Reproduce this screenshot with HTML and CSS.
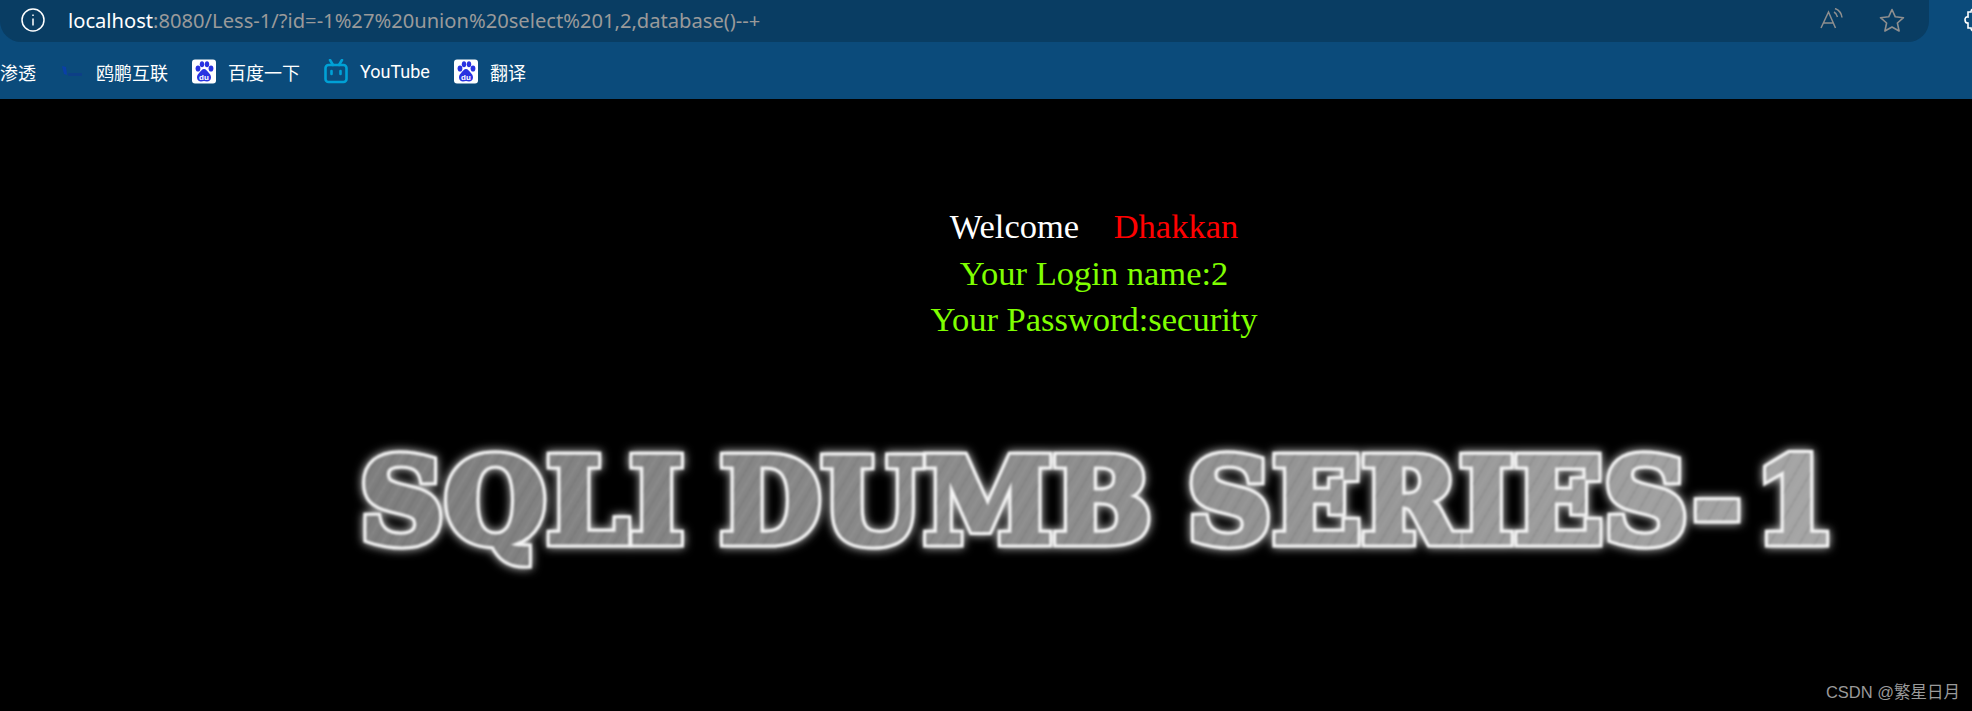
FILE: index.html
```html
<!DOCTYPE html>
<html lang="en">
<head>
  <meta charset="UTF-8">
  <title>Less-1</title>
  <link rel="stylesheet" href="styles.css">
</head>
<body>
  <header class="browser">
    <div class="toolbar">
      <div class="address">
        <svg class="info" width="24" height="24" viewBox="0 0 24 24" fill="none" stroke="#fff" stroke-width="1.500">
          <circle cx="12" cy="12" r="11"/>
          <path d="M12 10.500v7M12 6.500v1.500"/>
        </svg>
        <div class="url"><span class="host">localhost</span>:8080/Less-1/?id=-1%27%20union%20select%201,2,database()--+</div>
        <svg class="read" width="24" height="22" viewBox="0 0 24 22" fill="none" stroke="#8f8f8f" stroke-width="1.500">
          <path d="M1 20 8.500 4 15.500 20M3.500 15h10"/>
          <path d="M14 4c2 1 3 3 3.500 5M15 .5c4 1.500 6.500 5 7 9"/>
        </svg>
        <svg class="star" width="26" height="24" viewBox="0 0 26 24" fill="none" stroke="#8f8f8f" stroke-width="1.600" stroke-linejoin="round">
          <path d="M13 1.500 16.300 8.800 24.500 9.700 18.400 15 20.100 23 13 19 5.900 23 7.600 15 1.500 9.700 9.700 8.800z"/>
        </svg>
      </div>
      <svg class="ext" width="24" height="24" viewBox="0 0 24 24" fill="none" stroke="#fff" stroke-width="1.600">
        <path d="M8 4h3c0-4 6-4 6 0h4v5c4 0 4 6 0 6v5h-4c0 4-6 4-6 0H8v-5c-4 0-4-7 0-6z"/>
      </svg>
    </div>
    <nav class="bookmarks">
      <a class="mark">渗透</a>
      <a class="mark">
        <svg class="mini" width="24" height="24" viewBox="0 0 24 24">
          <path d="M2 6l4 1 1 8-3-1z" fill="#0a3fa8"/>
          <path d="M8 13h14v3H8z" fill="#0d3f86"/>
        </svg>
        鸥鹏互联
      </a>
      <a class="mark">
        <svg width="24" height="25" viewBox="0 0 24 24">
          <rect width="24" height="24" rx="3" fill="#fff"/>
          <ellipse cx="6" cy="9" rx="2.400" ry="3.100" fill="#2932e1"/>
          <ellipse cx="10" cy="4.800" rx="2.200" ry="3" fill="#2932e1"/>
          <ellipse cx="15" cy="4.800" rx="2.200" ry="3" fill="#2932e1"/>
          <ellipse cx="19" cy="9" rx="2.400" ry="3.100" fill="#2932e1"/>
          <path d="M12 9.500c-2 0-3 2-4.500 3.500-1.500 1.500-2.500 3-2.500 5 0 2.500 2 4 4 4 1.200 0 2-.4 3-.4s1.800.4 3 .4c2 0 4-1.500 4-4 0-2-1-3.500-2.500-5-1.500-1.500-2.500-3.500-4.500-3.500z" fill="#2932e1"/>
          <text x="12" y="20" class="du">du</text>
        </svg>
        百度一下
      </a>
      <a class="mark">
        <svg width="24" height="25" viewBox="0 0 24 25" fill="none" stroke="#00a1d6" stroke-width="2.600">
          <rect x="1.500" y="6" width="21" height="17" rx="3"/>
          <path d="M6 1l3 5M18 1l-3 5" stroke-linecap="round"/>
          <path d="M7.500 12v3M16.500 12v3" stroke-linecap="round"/>
        </svg>
        YouTube
      </a>
      <a class="mark">
        <svg width="24" height="25" viewBox="0 0 24 24">
          <rect width="24" height="24" rx="3" fill="#fff"/>
          <ellipse cx="6" cy="9" rx="2.400" ry="3.100" fill="#2932e1"/>
          <ellipse cx="10" cy="4.800" rx="2.200" ry="3" fill="#2932e1"/>
          <ellipse cx="15" cy="4.800" rx="2.200" ry="3" fill="#2932e1"/>
          <ellipse cx="19" cy="9" rx="2.400" ry="3.100" fill="#2932e1"/>
          <path d="M12 9.500c-2 0-3 2-4.500 3.500-1.500 1.500-2.500 3-2.500 5 0 2.500 2 4 4 4 1.200 0 2-.4 3-.4s1.800.4 3 .4c2 0 4-1.500 4-4 0-2-1-3.500-2.500-5-1.500-1.500-2.500-3.500-4.500-3.500z" fill="#2932e1"/>
          <text x="12" y="20" class="du">du</text>
        </svg>
        翻译
      </a>
    </nav>
  </header>

  <main class="page">
    <div class="login">
      <div>Welcome&nbsp;&nbsp;&nbsp;&nbsp;<span class="red">Dhakkan</span></div>
      <div class="green">Your Login name:2</div>
      <div class="green">Your Password:security</div>
    </div>
    <div class="banner"><span class="banner-text" data-text="SQLI DUMB SERIES-&#8202;1">SQLI DUMB SERIES-&#8202;1</span></div>
  </main>

  <div class="watermark">CSDN @繁星日月</div>
</body>
</html>
```

FILE: styles.css
```css
html, body {
  margin: 0;
  height: 100%;
}

body {
  position: relative;
  height: 711px;
  overflow: hidden;
  background: #000;
  font-family: Roboto, "Noto Sans CJK SC", sans-serif;
}

.du {
  font-family: "Liberation Sans", sans-serif;
  font-size: 8px;
  font-weight: bold;
  fill: #fff;
  text-anchor: middle;
}

.browser {
  height: 99px;
  background: #0b4b7b;
}

.toolbar {
  display: flex;
  align-items: flex-start;
  height: 42px;
}

.address {
  display: flex;
  flex: none;
  align-items: center;
  width: 1929px;
  height: 42px;
  background: #093d63;
  border-radius: 0 0 21px 21px;
}

.info {
  margin-left: 21px;
  margin-top: -2px;
}

.url {
  margin-left: 23px;
  margin-top: -3px;
  flex: 1;
  font-family: "Noto Sans", "Open Sans", sans-serif;
  font-size: 20.150px;
  color: #9a9a9a;
  white-space: nowrap;
}

.host {
  color: #fff;
}

.read {
  margin-top: -4px;
  margin-right: 35px;
}

.star {
  margin-top: -2px;
  margin-right: 24px;
}

.ext {
  margin-left: 31px;
  margin-top: 8px;
  flex: none;
}

.bookmarks {
  display: flex;
  align-items: center;
  gap: 24px;
  height: 57px;
  padding-top: 2px;
  box-sizing: border-box;
  color: #fff;
  font-size: 18px;
}

.mark {
  display: flex;
  align-items: center;
  gap: 12px;
  white-space: nowrap;
}

.page {
  display: flex;
  flex-direction: column;
  align-items: center;
}

.login {
  margin-top: 104px;
  margin-left: 216px;
  font-family: "Liberation Serif", serif;
  font-size: 34.500px;
  line-height: 46.500px;
  text-align: center;
  color: #fff;
}

.red {
  color: #ff0000;
}

.green {
  color: #7fff00;
}

.banner {
  align-self: flex-start;
  margin-top: 93px;
  margin-left: 360px;
  height: 130px;
  filter: blur(1px) drop-shadow(0 0 5px rgba(255, 255, 255, 0.85));
}

.banner-text {
  position: relative;
  display: inline-block;
  font-family: "DejaVu Serif", serif;
  font-size: 116px;
  font-weight: bold;
  line-height: 130px;
  white-space: nowrap;
  letter-spacing: 1px;
  word-spacing: -6px;
  color: #f4f4f4;
  -webkit-text-stroke: 11px #f4f4f4;
}

/* textured face of the title, laid over the white outline */
.banner-text::after {
  content: attr(data-text);
  position: absolute;
  left: 0;
  top: 0;
  color: transparent;
  -webkit-text-stroke: 5px transparent;
  background:
    repeating-linear-gradient(120deg, rgba(80, 80, 80, 0.28) 0 1px, transparent 1px 7px, rgba(185, 185, 185, 0.25) 7px 8px, transparent 8px 13px),
    linear-gradient(90deg, #7e7e7e, #8e8e8e 50%, #a6a6a6);
  -webkit-background-clip: text;
  background-clip: text;
}

.watermark {
  position: absolute;
  right: 12px;
  bottom: 8px;
  font-family: "Liberation Sans", "Noto Sans CJK SC", sans-serif;
  font-size: 16.500px;
  color: #9a9a9a;
}
```
